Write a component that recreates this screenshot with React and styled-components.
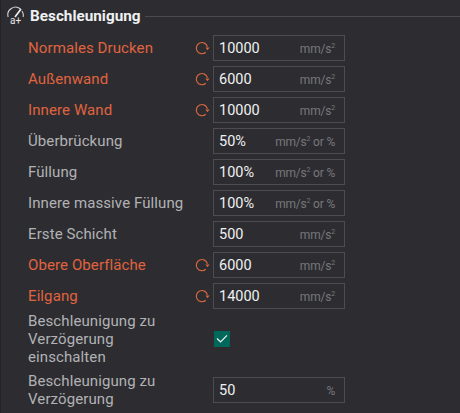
import React from 'react';
import styled, { createGlobalStyle } from 'styled-components';

const Global = createGlobalStyle`
    html, body {
        margin: 0;
        padding: 0;
        background: #2d2d31;
    }
`;

const Panel = styled.div`
    box-sizing: border-box;
    width: 460px;
    height: 413px;
    overflow: hidden;
    padding: 4px 0 0 1px;
    background: #2d2d31;
    border-left: 1px solid #232326;
    font-family: Roboto, "Noto Sans", sans-serif;
    display: flex;
    flex-direction: column;
`;

const Header = styled.div`
    display: flex;
    align-items: center;
    height: 24px;
    padding-left: 5px;
`;

const Title = styled.h3`
    margin: 0 4px 0 5px;
    font-size: 15.3px;
    font-weight: 700;
    color: #eff0f2;
`;

const Rule = styled.div`
    flex: 1;
    height: 1px;
    background: #4a4a50;
`;

const Rows = styled.div`
    display: flex;
    flex-direction: column;
    gap: 5px;
    margin-top: 7px;
`;

const Row = styled.div`
    display: flex;
    align-items: center;
    min-height: 26px;
    padding-left: 26px;
    margin: ${props => props.$tall ? '-2px 0 1px' : '0'};
`;

const Label = styled.label`
    width: 167px;
    font-size: 15px;
    letter-spacing: 0.1px;
    line-height: 18px;
    white-space: pre-line;
    color: ${props => props.$changed ? '#e0633f' : '#b2b2b5'};
`;

const Reset = styled.div`
    display: flex;
    align-items: center;
    width: 18px;
    height: 16px;
`;

const Field = styled.div`
    box-sizing: border-box;
    display: flex;
    align-items: center;
    justify-content: space-between;
    width: 132px;
    height: 26px;
    padding: 0 9px 0 5px;
    border: 1px solid #4c4c52;
`;

const Value = styled.span`
    font-size: 14.5px;
    color: #eff0f2;
`;

const Unit = styled.span`
    padding-top: 2px;
    font-size: 12px;
    letter-spacing: -0.2px;
    color: #77777c;

    sup {
        font-size: 7px;
        line-height: 0;
    }
`;

const Check = styled.div`
    display: flex;
    align-items: center;
    justify-content: center;
    width: 16px;
    height: 16px;
    margin-left: 1px;
    background: #00675b;
`;

const ResetIcon = () => (
    <svg width="15" height="14" viewBox="0 0 15 14" fill="none">
        <path d="M12.4 5.8 A5.6 5.6 0 1 0 10.8 11.2" stroke="#d8663f" strokeWidth="1.2" />
        <path d="M10.4 6.4 L14.6 6.4 L12.5 9.2 Z" fill="#d8663f" />
    </svg>
);

const GaugeIcon = () => (
    <svg width="18" height="20" viewBox="0 0 18 20" fill="none">
        <path d="M1.2 11 A7.6 7.6 0 0 1 13.4 3" stroke="#d4d4d6" strokeWidth="1.1" />
        <path d="M15 5 A7.6 7.6 0 0 1 16.2 11" stroke="#d4d4d6" strokeWidth="1.1" />
        <path d="M8 11 L14 3" stroke="#eeeeee" strokeWidth="1.7" />
        <text x="3" y="18" fontSize="10" fontFamily="Roboto, sans-serif" fill="#e6e6e8">a+</text>
    </svg>
);

const CheckIcon = () => (
    <svg width="12" height="10" viewBox="0 0 12 10" fill="none">
        <path d="M1 4.5 L4.6 8 L11 1.4" stroke="#f2f2f2" strokeWidth="1.2" />
    </svg>
);

const MM = () => <>mm/s<sup>2</sup></>;

const speeds = [
    { label: 'Normales Drucken', value: '10000', unit: <MM />, changed: true },
    { label: 'Außenwand', value: '6000', unit: <MM />, changed: true },
    { label: 'Innere Wand', value: '10000', unit: <MM />, changed: true },
    { label: 'Überbrückung', value: '50%', unit: <><MM /> or %</> },
    { label: 'Füllung', value: '100%', unit: <><MM /> or %</> },
    { label: 'Innere massive Füllung', value: '100%', unit: <><MM /> or %</> },
    { label: 'Erste Schicht', value: '500', unit: <MM /> },
    { label: 'Obere Oberfläche', value: '6000', unit: <MM />, changed: true },
    { label: 'Eilgang', value: '14000', unit: <MM />, changed: true },
];

const App = () => (
    <Panel>
        <Global />
        <Header>
            <GaugeIcon />
            <Title>Beschleunigung</Title>
            <Rule />
        </Header>
        <Rows>
            {speeds.map(el => (
                <Row key={el.label}>
                    <Label $changed={el.changed}>{el.label}</Label>
                    <Reset>{el.changed && <ResetIcon />}</Reset>
                    <Field>
                        <Value>{el.value}</Value>
                        <Unit>{el.unit}</Unit>
                    </Field>
                </Row>
            ))}
            <Row $tall>
                <Label>{'Beschleunigung zu\nVerzögerung\neinschalten'}</Label>
                <Reset />
                <Check><CheckIcon /></Check>
            </Row>
            <Row>
                <Label>{'Beschleunigung zu\nVerzögerung'}</Label>
                <Reset />
                <Field>
                    <Value>50</Value>
                    <Unit>%</Unit>
                </Field>
            </Row>
        </Rows>
    </Panel>
);

export default App;
